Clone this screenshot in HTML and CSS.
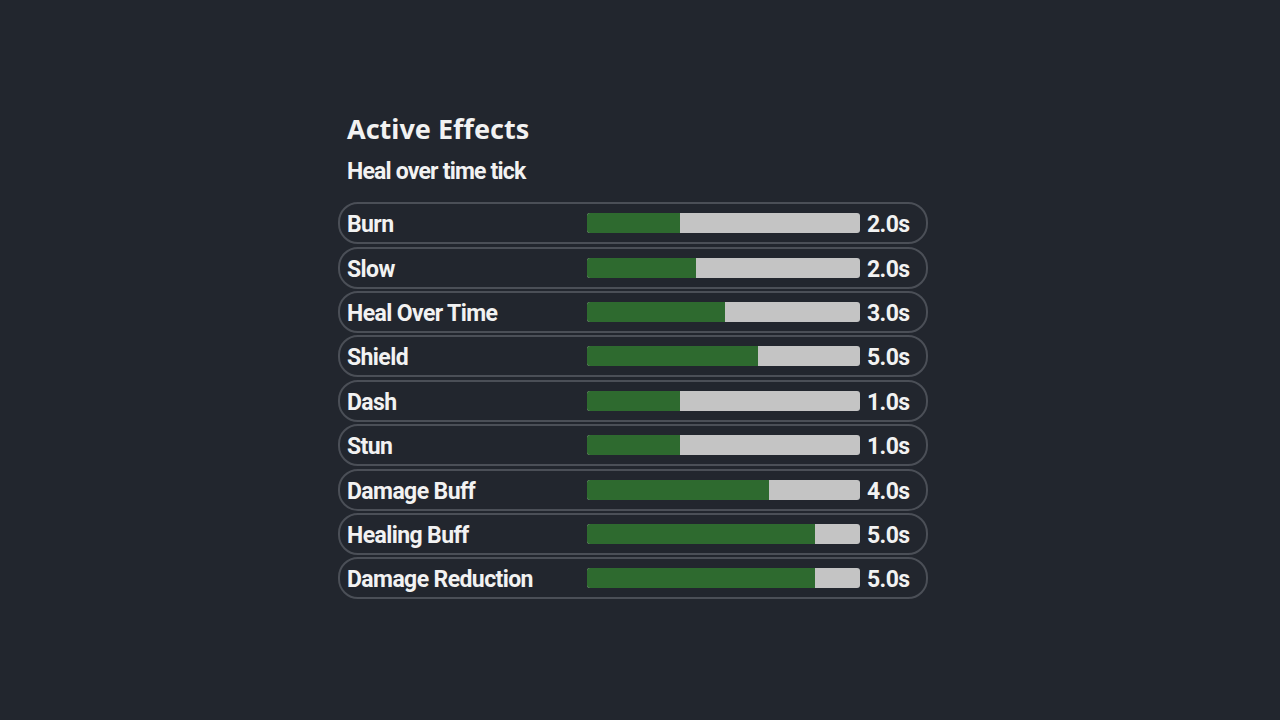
FILE: index.html
```html
<!DOCTYPE html>
<html lang="en">

<head>
    <meta charset="UTF-8">
    <meta name="viewport" content="width=device-width, initial-scale=1.0">
    <title>Active Effects</title>
    <link rel="stylesheet" href="styles.css">
</head>

<body>

    <div class="effects-panel">
        <h1 class="panel-title">Active Effects</h1>
        <p class="panel-event">Heal over time tick</p>

        <div class="effect-list">
            <div class="effect-row">
                <span class="effect-name">Burn</span>
                <div class="effect-bar"><div class="effect-fill" style="width: 34%"></div></div>
                <span class="effect-time">2.0s</span>
            </div>
            <div class="effect-row">
                <span class="effect-name">Slow</span>
                <div class="effect-bar"><div class="effect-fill" style="width: 40%"></div></div>
                <span class="effect-time">2.0s</span>
            </div>
            <div class="effect-row">
                <span class="effect-name">Heal Over Time</span>
                <div class="effect-bar"><div class="effect-fill" style="width: 50.5%"></div></div>
                <span class="effect-time">3.0s</span>
            </div>
            <div class="effect-row">
                <span class="effect-name">Shield</span>
                <div class="effect-bar"><div class="effect-fill" style="width: 62.6%"></div></div>
                <span class="effect-time">5.0s</span>
            </div>
            <div class="effect-row">
                <span class="effect-name">Dash</span>
                <div class="effect-bar"><div class="effect-fill" style="width: 34%"></div></div>
                <span class="effect-time">1.0s</span>
            </div>
            <div class="effect-row">
                <span class="effect-name">Stun</span>
                <div class="effect-bar"><div class="effect-fill" style="width: 34%"></div></div>
                <span class="effect-time">1.0s</span>
            </div>
            <div class="effect-row">
                <span class="effect-name">Damage Buff</span>
                <div class="effect-bar"><div class="effect-fill" style="width: 66.7%"></div></div>
                <span class="effect-time">4.0s</span>
            </div>
            <div class="effect-row">
                <span class="effect-name">Healing Buff</span>
                <div class="effect-bar"><div class="effect-fill" style="width: 83.5%"></div></div>
                <span class="effect-time">5.0s</span>
            </div>
            <div class="effect-row">
                <span class="effect-name">Damage Reduction</span>
                <div class="effect-bar"><div class="effect-fill" style="width: 83.5%"></div></div>
                <span class="effect-time">5.0s</span>
            </div>
        </div>
    </div>

</body>

</html>
```

FILE: styles.css
```css
body {
    display: flex;
    align-items: center;
    justify-content: center;
    height: 100vh;
    margin: 0;
    background-color: #22262e;
    color: #f2f2f2;
    font-family: Roboto, "Liberation Sans", sans-serif;
}

.effects-panel {
    width: 604px;
    padding-bottom: 10px;
}

.panel-title {
    margin: 0 0 0 9px;
    font-family: "Noto Sans", sans-serif;
    font-size: 27px;
    font-weight: 700;
    line-height: 36px;
}

.panel-event {
    margin: 11.5px 0 16px 9px;
    font-size: 23px;
    font-weight: 700;
    line-height: 28px;
    letter-spacing: -0.8px;
}

.effect-list {
    display: flex;
    flex-direction: column;
    gap: 2.4px;
    width: 590px;
}

.effect-row {
    box-sizing: border-box;
    display: grid;
    grid-template-columns: 240px 273px auto;
    align-items: center;
    height: 42px;
    padding: 0 14px 0 7px;
    border: 2px solid #4b4f57;
    border-radius: 20px;
}

.effect-name,
.effect-time {
    padding-top: 4px;
    font-size: 23px;
    font-weight: 700;
    line-height: 28px;
    letter-spacing: -0.6px;
}

.effect-time {
    padding-left: 7px;
}

.effect-bar {
    height: 20px;
    background: #c4c4c4;
    border-radius: 3px;
    overflow: hidden;
}

.effect-fill {
    height: 100%;
    background: #2e6a2f;
}
```
